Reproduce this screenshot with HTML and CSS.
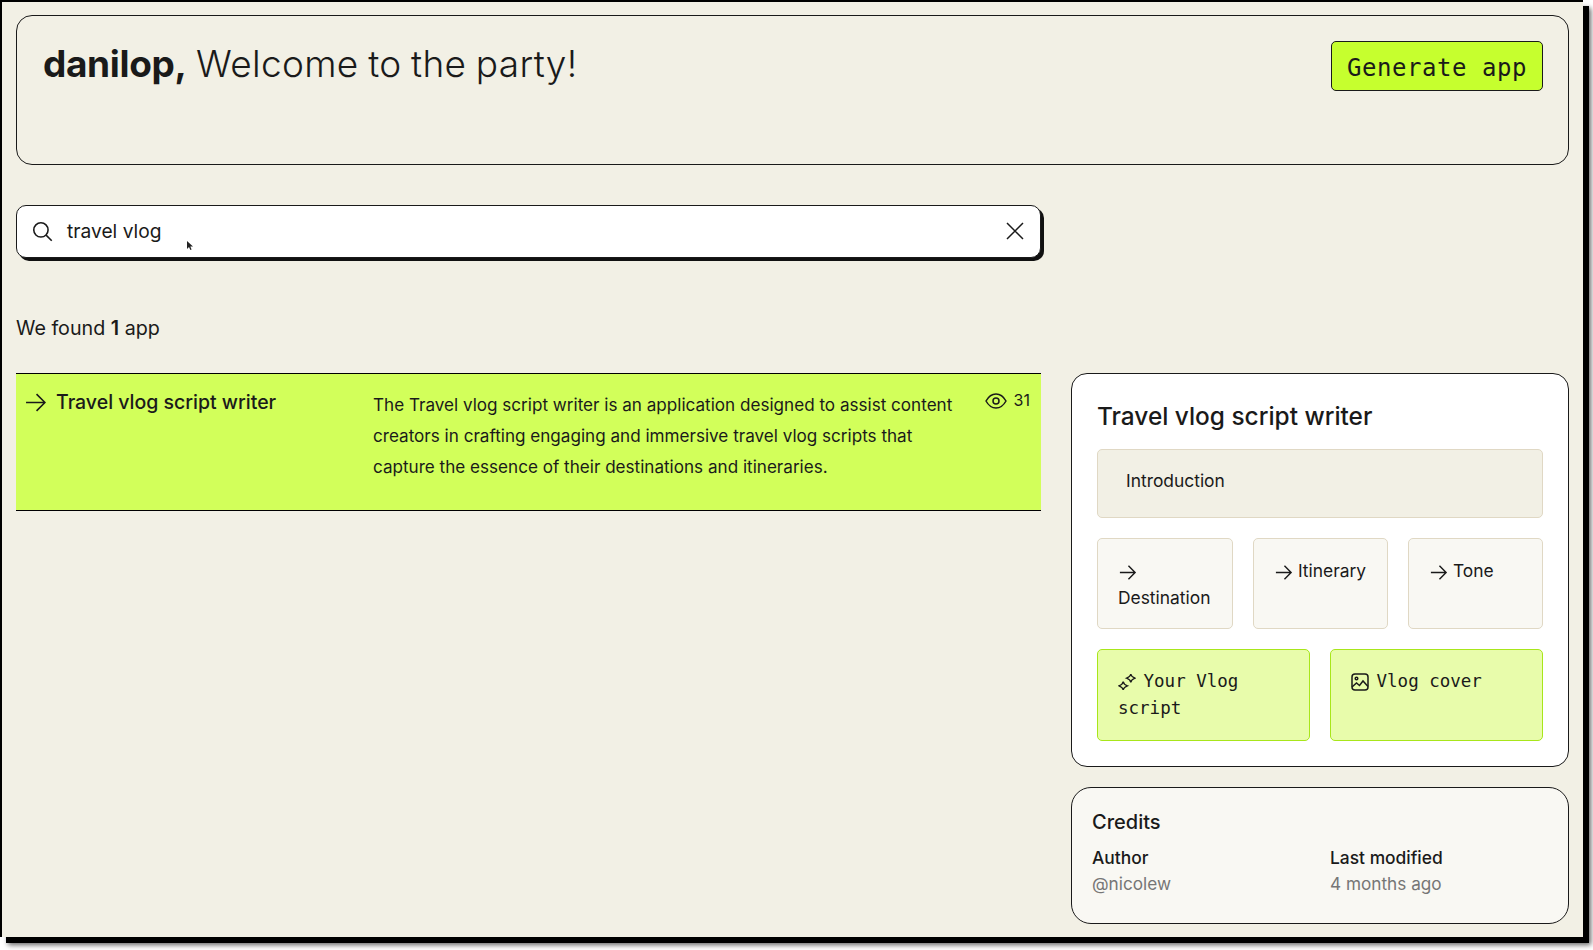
FILE: index.html
```html
<!DOCTYPE html>
<html lang="en">
<head>
<meta charset="utf-8">
<title>Welcome to the party</title>
<link rel="stylesheet" href="styles.css">
</head>
<body>
<div class="window">
  <header class="hero">
    <h1 class="hero-title"><strong>danilop,</strong> Welcome to the party!</h1>
    <button class="generate">Generate app</button>
  </header>

  <div class="search">
    <svg class="search-icon" viewBox="0 0 20 20"><circle cx="8.500" cy="8.500" r="6.800"/><path d="M13.400 13.400 18.800 18.800"/></svg>
    <span class="search-text">travel vlog</span>
    <svg class="cursor" viewBox="0 0 7 10"><path d="M0 0v8l2-2 1.400 3 1.200-.6L3.300 5.600H6z"/></svg>
    <svg class="close-icon" viewBox="0 0 20 20"><path d="M2 2 18 18M18 2 2 18"/></svg>
  </div>

  <p class="found">We found <b>1</b> app</p>

  <div class="results">
    <article class="app-row">
      <div class="app-name">
        <svg class="arrow-lg" viewBox="0 0 20 20"><path d="M1 10H19M11 2l8 8-8 8"/></svg>
        <span>Travel vlog script writer</span>
      </div>
      <p class="app-desc">The Travel vlog script writer is an application designed to assist content creators in crafting engaging and immersive travel vlog scripts that capture the essence of their destinations and itineraries.</p>
      <div class="views">
        <svg class="eye" viewBox="0 0 22 16"><path d="M1 8C3.500 3.500 7 1 11 1s7.500 2.500 10 7c-2.500 4.500-6 7-10 7S3.500 12.500 1 8z"/><circle cx="11" cy="8" r="3"/></svg>
        <span>31</span>
      </div>
    </article>

    <aside class="side">
      <section class="panel">
        <h2 class="panel-title">Travel vlog script writer</h2>
        <div class="step step-intro">Introduction</div>
        <div class="steps-three">
          <div class="step step-light"><svg class="arrow" viewBox="0 0 20 20"><path d="M2 10H18M11 3l7 7-7 7"/></svg> Destination</div>
          <div class="step step-light"><svg class="arrow" viewBox="0 0 20 20"><path d="M2 10H18M11 3l7 7-7 7"/></svg> Itinerary</div>
          <div class="step step-light"><svg class="arrow" viewBox="0 0 20 20"><path d="M2 10H18M11 3l7 7-7 7"/></svg> Tone</div>
        </div>
        <div class="steps-two">
          <div class="step step-output"><svg class="out-icon out-spark" viewBox="0 0 18 18"><path d="M12.800 1c.3 2 1 3 4.200 4.200-3.200 1.200-3.900 2.200-4.200 4.200-.3-2-1-3-4.200-4.200 3.200-1.200 3.900-2.200 4.200-4.200zM5.200 8.600c.3 2 1 3 4.200 4.200-3.200 1.200-3.900 2.200-4.200 4.200-.3-2-1-3-4.200-4.200 3.200-1.200 3.900-2.200 4.200-4.200z"/></svg> Your Vlog script</div>
          <div class="step step-output"><svg class="out-icon" viewBox="0 0 18 18"><rect x="1" y="1" width="16" height="16" rx="3"/><circle cx="5.500" cy="5.500" r="1.300"/><path d="M1 14l4.500-4 3 2.500 3.500-4.500 5 5.500"/></svg> Vlog cover</div>
        </div>
      </section>

      <section class="credits">
        <h3 class="credits-title">Credits</h3>
        <dl class="credits-grid">
          <div><dt>Author</dt><dd>@nicolew</dd></div>
          <div><dt>Last modified</dt><dd>4 months ago</dd></div>
        </dl>
      </section>
    </aside>
  </div>
</div>
</body>
</html>
```
FILE: styles.css
```css
* { box-sizing: border-box; }
html, body { margin: 0; height: 100%; background: #fff; }
body { font-family: "Inter", "Liberation Sans", sans-serif; color: #1a1a1a; overflow: hidden; }
.window {
  width: 1583px; height: 937px;
  background: #f2f0e5;
  border-left: 2px solid #000;
  border-top: 2px solid #000;
  box-shadow: 6px 6px 0 #000, 8px 8px 5px rgba(0,0,0,.6);
  padding: 13px 14px 0 14px;
}
svg { fill: none; stroke: currentColor; stroke-width: 1.5; flex: none; }

.hero {
  height: 150px;
  border: 1px solid #1a1a1a;
  border-radius: 16px;
  padding: 25px 25px 0 26px;
  display: flex; justify-content: space-between; align-items: flex-start;
}
.hero-title { margin: 0; font-size: 37px; font-weight: 300; line-height: 46px; letter-spacing: .33px; word-spacing: -1.200px; }
.hero-title strong { font-weight: 700; letter-spacing: -.35px; }
.generate {
  height: 50px; width: 212px;
  background: #c6ff2e; border: 1px solid #1a1a1a; border-radius: 5px;
  font-family: "DejaVu Sans Mono", monospace; font-size: 24px; letter-spacing: .55px; color: #1a1a1a;
  padding: 3px 0 0;
}

.search {
  position: relative;
  margin-top: 40px; width: 1025px; height: 53px;
  background: #fff; border: 1px solid #1a1a1a; border-radius: 10px;
  box-shadow: 3px 3px 0 #111;
  display: flex; align-items: center; padding: 0 15px 1px 15px;
}
.search-icon { width: 21px; height: 21px; }
.search-text { margin-left: 14px; font-size: 19.200px; flex: 1; }
.close-icon { width: 20px; height: 20px; }
.cursor { position: absolute; left: 170px; top: 35px; width: 7px; height: 10px; fill: #222; stroke: none; }

.found { margin: 56px 0 0; font-size: 19.700px; line-height: 28px; }
.found b { font-weight: 600; }

.results { margin-top: 31px; display: grid; grid-template-columns: 1025px 498px; column-gap: 30px; align-items: start; }

.app-row {
  height: 138px;
  background: #d2ff5a;
  border-top: 1px solid #000; border-bottom: 1px solid #000;
  display: flex; align-items: flex-start;
}
.app-name { width: 357px; padding: 14px 0 0 9px; display: flex; align-items: center; gap: 10px; font-size: 19.500px; font-weight: 500; line-height: 28px; }
.arrow-lg { width: 21px; height: 21px; margin-top: 1px; }
.app-desc { margin: 15px 0 0; width: 586px; font-size: 17.100px; line-height: 31px; }
.views { margin: 16px 0 0 auto; padding-right: 11px; display: flex; align-items: center; gap: 7px; font-size: 16px; }
.eye { width: 22px; height: 16px; margin-top: 2px; }

.side { display: flex; flex-direction: column; gap: 20px; }
.panel {
  height: 394px; background: #fff;
  border: 1px solid #1a1a1a; border-radius: 16px;
  padding: 25px 25px 0 25px;
}
.panel-title { margin: 0; font-size: 24.400px; font-weight: 500; line-height: 34px; }
.step { border-radius: 5px; font-size: 17.400px; line-height: 27px; }
.step-intro { margin-top: 16px; height: 69px; background: #f2f0e5; border: 1px solid #e0d8c4; padding: 17px 28px; }
.steps-three { margin-top: 20px; display: grid; grid-template-columns: 136px 135px 135px; column-gap: 20px; }
.step-light { height: 91px; background: #f9f8f3; border: 1px solid #e0d8c4; padding: 18px 20px 0; }
.arrow { width: 19px; height: 19px; vertical-align: -5px; }
.steps-two { margin-top: 20px; display: grid; grid-template-columns: 1fr 1fr; column-gap: 20px; }
.step-output {
  height: 92px; background: #e8fcab; border: 1px solid #a8e61a;
  padding: 18px 20px;
  font-family: "DejaVu Sans Mono", monospace; font-size: 17.500px; line-height: 27px;
}
.out-icon { width: 18px; height: 18px; vertical-align: -4px; margin-right: -3px; }
.out-spark { stroke-width: 1.300; }

.credits {
  height: 137px; background: #f9f8f3;
  border: 1px solid #1a1a1a; border-radius: 20px;
  padding: 20px 20px 0;
}
.credits-title { margin: 0; font-size: 20px; font-weight: 500; line-height: 28px; }
.credits-grid { margin: 9px 0 0; display: grid; grid-template-columns: 238px 1fr; }
.credits-grid dt { font-size: 17.400px; font-weight: 500; line-height: 26px; }
.credits-grid dd { margin: 0; font-size: 17.200px; line-height: 26px; color: #767676; }
```
